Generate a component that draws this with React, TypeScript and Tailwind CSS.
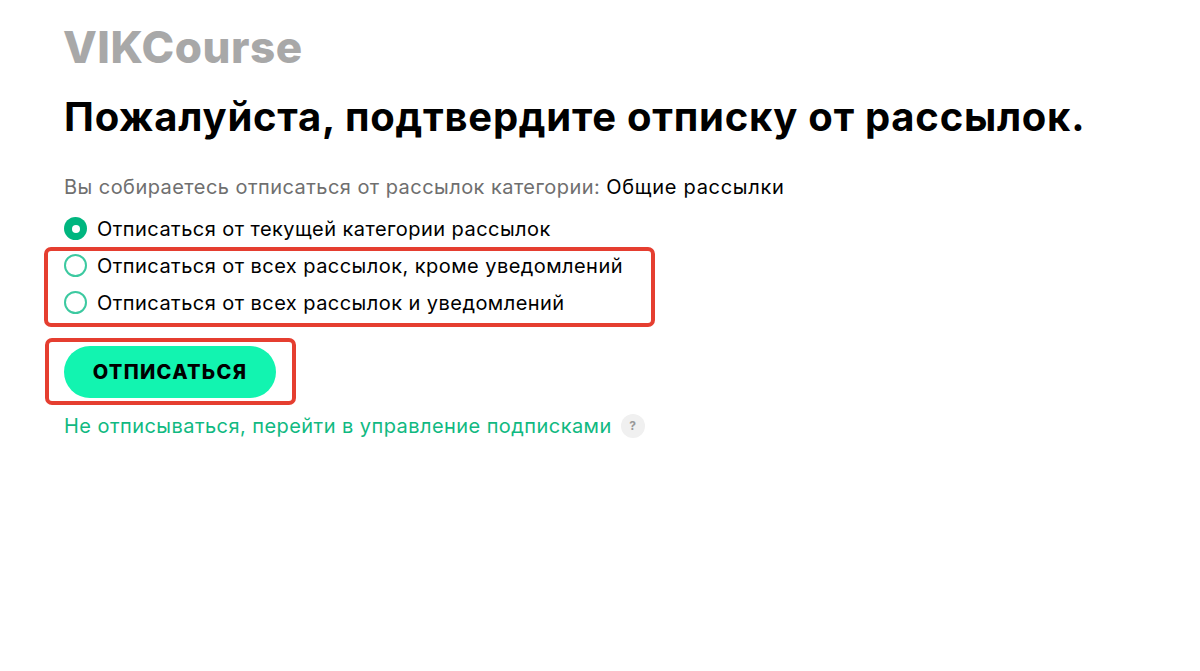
const font = { fontFamily: '"Inter", "Noto Sans", sans-serif' };

function Radio({ checked, label }: { checked?: boolean; label: string }) {
  return (
    <label className="flex h-[37px] items-center">
      {checked ? (
        <span className="flex h-[23px] w-[23px] items-center justify-center rounded-full bg-[#00b67f]">
          <span className="h-2 w-2 rounded-full bg-white" />
        </span>
      ) : (
        <span className="h-[23px] w-[23px] rounded-full border-2 border-[#3cc9a0] bg-white" />
      )}
      <span className="ml-[10px] text-[20px] tracking-[0.45px] text-black">{label}</span>
    </label>
  );
}

export default function App() {
  return (
    <div style={font} className="relative min-h-[671px] bg-white pl-16 pt-[21px]">
      <div className="-ml-px text-[44px] leading-[52px] font-extrabold tracking-[0.5px] text-[#a8a8a8]">VIKCourse</div>
      <h1 className="mt-[18px] text-[40px] leading-[52px] font-bold tracking-[0.75px] text-black">Пожалуйста, подтвердите отписку от рассылок.</h1>
      <p className="mt-[30px] text-[20px] leading-[28px] tracking-[0.45px] text-[#6f6f6f]">
        Вы собираетесь отписаться от рассылок категории: <span className="tracking-[0.7px] text-black">Общие рассылки</span>
      </p>
      <div className="mt-[9px] flex flex-col">
        <Radio checked label="Отписаться от текущей категории рассылок" />
        <Radio label="Отписаться от всех рассылок, кроме уведомлений" />
        <Radio label="Отписаться от всех рассылок и уведомлений" />
      </div>
      <button className="mt-[25px] flex h-[52px] w-[212px] items-center justify-center rounded-full bg-[#12f4b0] text-[20px] font-extrabold tracking-[1.3px] text-black">
        ОТПИСАТЬСЯ
      </button>
      <div className="mt-[14px] flex items-center">
        <a className="text-[20px] leading-[28px] tracking-[0.44px] text-[#10b981]">Не отписываться, перейти в управление подписками</a>
        <span className="ml-[9px] flex h-6 w-6 items-center justify-center rounded-full bg-[#f0f0f0] text-[12px] font-bold text-[#999999]">?</span>
      </div>
      <div className="absolute left-[44px] top-[247px] h-[80px] w-[611px] rounded-[7px] border-[4px] border-[#e53e30]" />
      <div className="absolute left-[45px] top-[338px] h-[67px] w-[251px] rounded-[7px] border-[4px] border-[#e53e30]" />
    </div>
  );
}
